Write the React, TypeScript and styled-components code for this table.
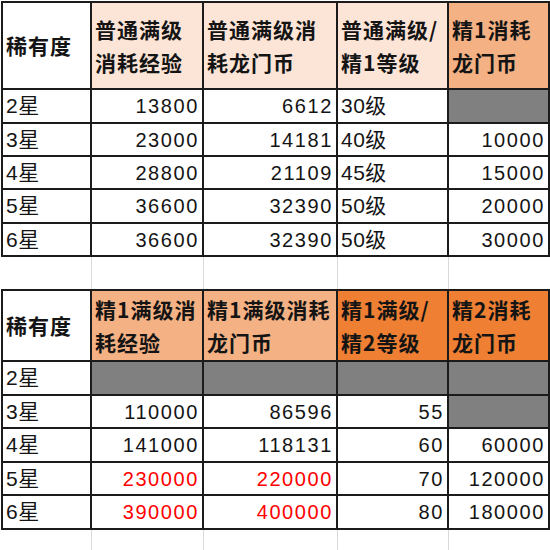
import styled, { createGlobalStyle } from "styled-components";

const GlobalStyle = createGlobalStyle`
  html, body {
    margin: 0;
    padding: 0;
    background: #ffffff;
  }
`;

type Tone = "none" | "light" | "mid" | "strong" | "grey";

const fills: Record<Tone, string> = {
  none: "#ffffff",
  light: "#fce4d6",
  mid: "#f4b183",
  strong: "#ee7f33",
  grey: "#808080",
};

const Page = styled.div`
  width: 550px;
  height: 550px;
  overflow: hidden;
  padding: 1px 0 0 1px;
  box-sizing: border-box;
  background: #ffffff;
`;

const Sheet = styled.table`
  border-collapse: collapse;
  table-layout: fixed;
  width: 547px;
  font-family: "Liberation Sans", "Noto Sans CJK SC", sans-serif;
  font-size: 20px;
  letter-spacing: 1.6px;
  color: #141414;
`;

const Row = styled.tr<{ $h: number }>`
  height: ${(p) => p.$h}px;
`;

const Head = styled.th<{ $tone?: Tone }>`
  border: 2px solid #1b1b1b;
  background: ${(p) => fills[p.$tone ?? "none"]};
  font-weight: 700;
  text-align: left;
  vertical-align: middle;
  line-height: 33px;
  padding: 0 0 0 3px;
  white-space: nowrap;
  font-family: "Noto Sans CJK SC", "Liberation Sans", sans-serif;
  font-size: 21px;
  letter-spacing: 1px;
`;

const Cell = styled.td<{ $tone?: Tone; $right?: boolean; $red?: boolean }>`
  border: 2px solid #1b1b1b;
  background: ${(p) => fills[p.$tone ?? "none"]};
  color: ${(p) => (p.$red ? "#ff0000" : "#141414")};
  text-align: ${(p) => (p.$right ? "right" : "left")};
  vertical-align: middle;
  padding: 0 3px 0 3px;
  line-height: 24px;
  white-space: nowrap;
`;

const Label = styled.span`
  font-size: 21px;
  letter-spacing: 0.5px;
`;

const Blank = styled.td`
  border: none;
  border-left: 1px solid #d9d9d9;
  border-right: 1px solid #d9d9d9;
  &:first-child {
    border-left: none;
  }
  &:last-child {
    border-right: none;
  }
`;

type Val = { v?: string; grey?: boolean; red?: boolean; right?: boolean };

const table1: [string, Val[]][] = [
  ["2星", [{ v: "13800", right: true }, { v: "6612", right: true }, { v: "30级" }, { grey: true }]],
  ["3星", [{ v: "23000", right: true }, { v: "14181", right: true }, { v: "40级" }, { v: "10000", right: true }]],
  ["4星", [{ v: "28800", right: true }, { v: "21109", right: true }, { v: "45级" }, { v: "15000", right: true }]],
  ["5星", [{ v: "36600", right: true }, { v: "32390", right: true }, { v: "50级" }, { v: "20000", right: true }]],
  ["6星", [{ v: "36600", right: true }, { v: "32390", right: true }, { v: "50级" }, { v: "30000", right: true }]],
];

const table2: [string, Val[]][] = [
  ["2星", [{ grey: true }, { grey: true }, { grey: true }, { grey: true }]],
  ["3星", [{ v: "110000", right: true }, { v: "86596", right: true }, { v: "55", right: true }, { grey: true }]],
  ["4星", [{ v: "141000", right: true }, { v: "118131", right: true }, { v: "60", right: true }, { v: "60000", right: true }]],
  ["5星", [{ v: "230000", right: true, red: true }, { v: "220000", right: true, red: true }, { v: "70", right: true }, { v: "120000", right: true }]],
  ["6星", [{ v: "390000", right: true, red: true }, { v: "400000", right: true, red: true }, { v: "80", right: true }, { v: "180000", right: true }]],
];

const rowHeights1 = [34, 33, 33, 34, 33];
const rowHeights2 = [34, 33, 34, 33, 34];

function DataRows({ rows, heights }: { rows: [string, Val[]][]; heights: number[] }) {
  return (
    <>
      {rows.map(([star, vals], i) => (
        <Row $h={heights[i]} key={star}>
          <Cell>
            <Label>{star}</Label>
          </Cell>
          {vals.map((c, j) => (
            <Cell key={j} $tone={c.grey ? "grey" : "none"} $right={c.right} $red={c.red}>
              {c.v && /级/.test(c.v) ? <Label>{c.v}</Label> : c.v}
            </Cell>
          ))}
        </Row>
      ))}
    </>
  );
}

function BlankRow({ h }: { h: number }) {
  return (
    <Row $h={h}>
      <Blank />
      <Blank />
      <Blank />
      <Blank />
      <Blank />
    </Row>
  );
}

export default function App() {
  return (
    <>
      <GlobalStyle />
      <Page>
        <Sheet>
          <colgroup>
            <col style={{ width: 89 }} />
            <col style={{ width: 112 }} />
            <col style={{ width: 134 }} />
            <col style={{ width: 111 }} />
            <col style={{ width: 101 }} />
          </colgroup>
          <tbody>
            <Row $h={87}>
              <Head>稀有度</Head>
              <Head $tone="light">
                普通满级
                <br />
                消耗经验
              </Head>
              <Head $tone="light">
                普通满级消
                <br />
                耗龙门币
              </Head>
              <Head $tone="light">
                普通满级/
                <br />
                精1等级
              </Head>
              <Head $tone="mid">
                精1消耗
                <br />
                龙门币
              </Head>
            </Row>
            <DataRows rows={table1} heights={rowHeights1} />
            <BlankRow h={34} />
            <Row $h={71}>
              <Head>稀有度</Head>
              <Head $tone="mid">
                精1满级消
                <br />
                耗经验
              </Head>
              <Head $tone="mid">
                精1满级消耗
                <br />
                龙门币
              </Head>
              <Head $tone="strong">
                精1满级/
                <br />
                精2等级
              </Head>
              <Head $tone="strong">
                精2消耗
                <br />
                龙门币
              </Head>
            </Row>
            <DataRows rows={table2} heights={rowHeights2} />
            <BlankRow h={30} />
          </tbody>
        </Sheet>
      </Page>
    </>
  );
}
